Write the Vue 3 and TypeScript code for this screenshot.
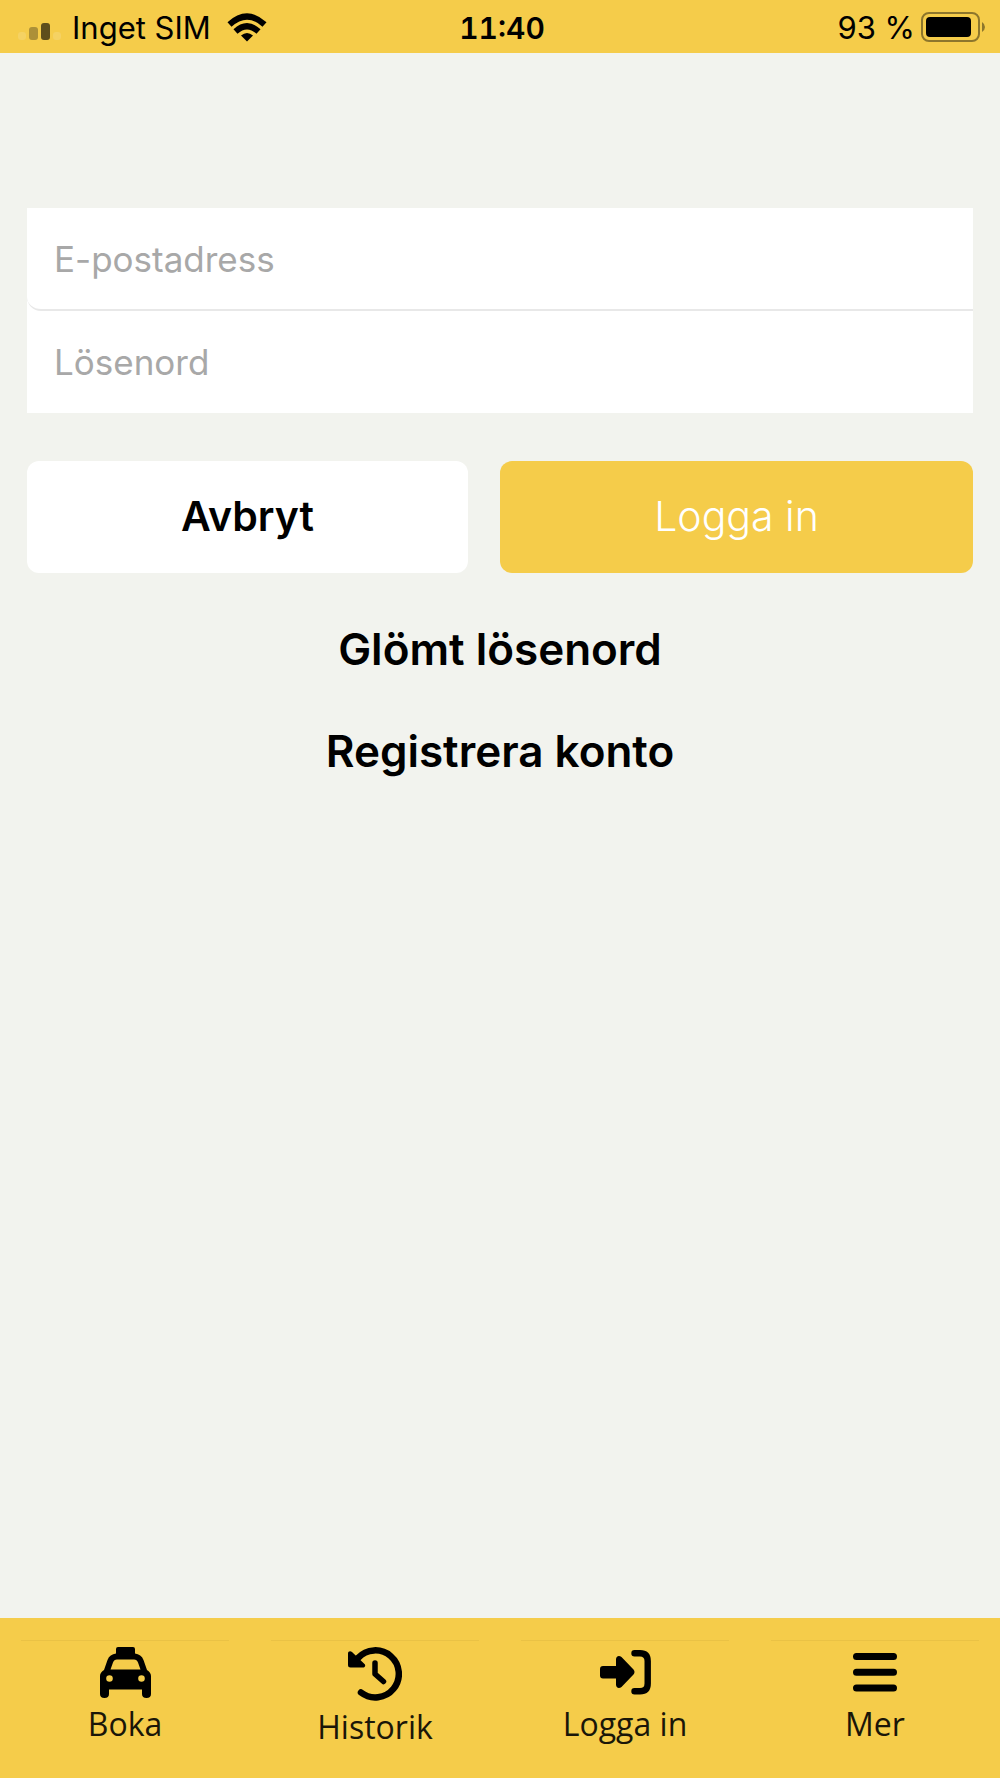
<script setup lang="ts">
import { ref } from 'vue'

type Icon = 'taxi' | 'history' | 'login' | 'menu'

const email = ref('')
const password = ref('')

const tabs: { icon: Icon; label: string }[] = [
  { icon: 'taxi', label: 'Boka' },
  { icon: 'history', label: 'Historik' },
  { icon: 'login', label: 'Logga in' },
  { icon: 'menu', label: 'Mer' },
]
</script>

<template>
  <div class="screen">
    <header class="status">
      <div class="carrier">
        <svg class="signal" width="44" height="18" viewBox="0 0 44 18" aria-hidden="true">
          <rect x="0" y="9" width="8" height="8" rx="3" fill="#f5d263" />
          <rect x="11" y="4" width="9" height="13" rx="3" fill="#ac9038" />
          <rect x="23" y="0" width="9" height="17" rx="3" fill="#5e4e1c" />
          <rect x="35" y="9" width="8" height="8" rx="3" fill="#f5d263" />
        </svg>
        <span>Inget SIM</span>
        <svg class="wifi" width="40" height="30" viewBox="0 0 40 30" aria-hidden="true">
          <g fill="none" stroke="#000" stroke-width="6">
            <path d="M2.500 11.500Q20 -4.500 37.500 11.500" />
            <path d="M8.500 18.500Q20 8 31.500 18.500" />
          </g>
          <path d="M14 22.500Q20 17.500 26 22.500L20 28.500Z" />
        </svg>
      </div>
      <time class="clock">11:40</time>
      <div class="power">
        <span>93 %</span>
        <svg class="battery" width="66" height="32" viewBox="0 0 66 32" aria-hidden="true">
          <rect x="2" y="2" width="57" height="28" rx="7" fill="none" stroke="#8d762c" stroke-width="2" />
          <rect x="6" y="6" width="45" height="20" rx="4" />
          <path d="M62 11Q65 13 65 16T62 21Z" fill="#8d762c" />
        </svg>
      </div>
    </header>

    <main class="content">
      <form @submit.prevent>
        <div class="fields">
          <input v-model="email" class="field first" type="email" placeholder="E-postadress" aria-label="E-postadress" />
          <input v-model="password" class="field" type="password" placeholder="Lösenord" aria-label="Lösenord" />
        </div>
        <div class="actions">
          <button class="btn cancel" type="button">Avbryt</button>
          <button class="btn submit" type="submit">Logga in</button>
        </div>
      </form>
      <div class="links">
        <a href="#forgot">Glömt lösenord</a>
        <a href="#register">Registrera konto</a>
      </div>
    </main>

    <nav class="tabs">
      <a v-for="tab in tabs" :key="tab.icon" class="tab" :href="'#' + tab.icon">
        <svg v-if="tab.icon === 'taxi'" width="51" height="51" viewBox="0 0 51 51" aria-hidden="true">
          <path
            fill-rule="evenodd"
            d="M18 0H33Q35 0 35 2V6.500C39 7 42 9 43.500 13L47 23C49.500 24.500 51 26.500 51 29V47Q51 51 46.500 51T42 47V42.500H9V47Q9 51 4.500 51T0 47V29C0 26.500 1.500 24.500 4 23L7.500 13C9 9 12 7 16 6.500V2Q16 0 18 0ZM17 12.500C15 12.500 13.700 13.500 13 15.500L10.500 22.500H40.500L38 15.500C37.300 13.500 36 12.500 34 12.500ZM9.500 28.200A3.300 3.300 0 1 0 9.500 34.800A3.300 3.300 0 1 0 9.500 28.200ZM41.500 28.200A3.300 3.300 0 1 0 41.500 34.800A3.300 3.300 0 1 0 41.500 28.200Z"
          />
        </svg>
        <svg v-else-if="tab.icon === 'history'" width="54" height="54" viewBox="0 0 54 54" aria-hidden="true">
          <g fill="none" stroke="#000" stroke-linecap="round" stroke-linejoin="round">
            <path d="M13 45.500A23.500 23.500 0 1 0 10 11" stroke-width="6.500" />
            <path d="M27 16V27L35.500 34.500" stroke-width="5.500" />
          </g>
          <path d="M0 6.500C0 4 2.500 3.500 4 5L16.500 17C18 18.500 17 20.500 15 20.500H2.500Q0 20.500 0 18Z" />
        </svg>
        <svg v-else-if="tab.icon === 'login'" width="51" height="51" viewBox="0 0 51 51" aria-hidden="true">
          <path d="M3 19H16V12.500C16 9 19 8 21.500 10L33.500 22.500Q35.500 25 33.500 27.500L21.500 40C19 42 16 41 16 37.500V31.500H3Q0 31.500 0 28.500V22Q0 19 3 19Z" />
          <path d="M34.500 6.200H40Q47.700 6.200 47.700 14V36.500Q47.700 44.300 40 44.300H34.500" fill="none" stroke="#000" stroke-width="6.400" stroke-linecap="round" />
        </svg>
        <svg v-else width="51" height="51" viewBox="0 0 51 51" aria-hidden="true">
          <path d="M6.500 9.500H43.500M6.500 25.200H43.500M6.500 41H43.500" stroke="#000" stroke-width="7" stroke-linecap="round" />
        </svg>
        <span>{{ tab.label }}</span>
      </a>
    </nav>
  </div>
</template>

<style>
body {
  margin: 0;
}
</style>

<style scoped>
.screen {
  display: flex;
  flex-direction: column;
  min-height: 100vh;
  background: #f2f3ee;
  color: #000;
  font-family: Inter, "Liberation Sans", sans-serif;
}

.status {
  display: grid;
  grid-template-columns: 1fr auto 1fr;
  align-items: center;
  box-sizing: border-box;
  height: 53px;
  padding: 2px 14px 0 18px;
  background: #f5cc4a;
  font-size: 31px;
  line-height: 40px;
}

.carrier,
.power {
  display: flex;
  align-items: center;
}

.signal {
  margin: 8px 10px 0 0;
}

.wifi {
  margin-left: 16px;
}

.clock {
  font-size: 30px;
  font-weight: 600;
  font-variant-numeric: tabular-nums;
}

.power {
  justify-content: flex-end;
  gap: 5px;
}

.battery {
  margin-bottom: 2px;
}

.content {
  flex: 1;
  padding: 155px 27px 0;
}

.fields {
  background: #fff;
}

.field {
  display: block;
  box-sizing: border-box;
  width: 100%;
  height: 102px;
  padding: 0 27px;
  border: 0;
  background: #fff;
  color: #000;
  font: 400 35px Inter, sans-serif;
}

.field.first {
  height: 103px;
  border-bottom: 2px solid #e8e8e8;
  border-radius: 14px 0 0 14px;
}

.field::placeholder {
  color: #a8a8a8;
  opacity: 1;
}

.actions {
  display: grid;
  grid-template-columns: 441fr 473fr;
  gap: 32px;
  margin-top: 48px;
}

.btn {
  height: 112px;
  padding: 0 0 3px;
  border: 0;
  border-radius: 12px;
  font-family: Inter, sans-serif;
  font-size: 41px;
}

.cancel {
  background: #fff;
  color: #000;
  font-weight: 600;
}

.submit {
  background: #f5cc4a;
  color: #fff;
  font-weight: 300;
}

.links {
  display: flex;
  flex-direction: column;
  align-items: center;
  gap: 54px;
  margin-top: 52px;
  font: 600 44px/48px Inter, sans-serif;
}

.links a {
  color: #000;
  text-decoration: none;
}

.tabs {
  display: grid;
  grid-template-columns: repeat(4, 1fr);
  gap: 42px;
  box-sizing: border-box;
  height: 160px;
  padding: 22px 21px 0;
  background: #f5cc4a;
}

.tab {
  display: flex;
  flex-direction: column;
  align-items: center;
  gap: 6px;
  padding-top: 6px;
  border-top: 1px solid #eac245;
  color: #1a1608;
  font: 400 32px/40px "Open Sans", "Noto Sans", sans-serif;
  text-decoration: none;
  white-space: nowrap;
}

.tab svg {
  flex: none;
  fill: #000;
}
</style>
